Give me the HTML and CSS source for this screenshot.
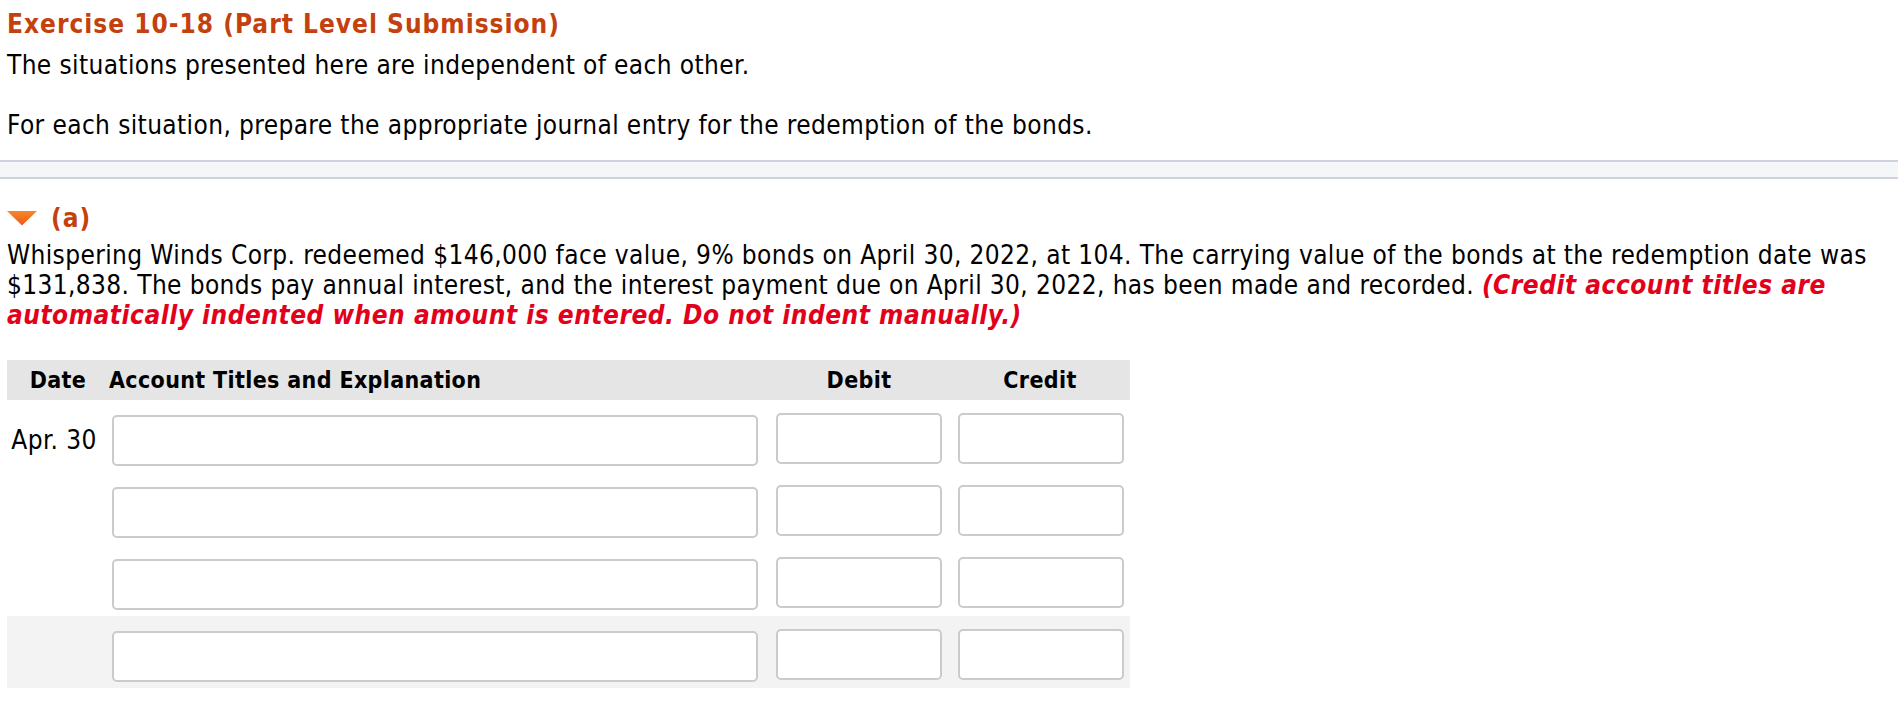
FILE: index.html
```html
<!DOCTYPE html>
<html lang="en">
<head>
<meta charset="utf-8">
<title>Exercise 10-18</title>
<link rel="stylesheet" href="styles.css">
</head>
<body>
<div class="intro">
  <h1 class="title">Exercise 10-18 (Part Level Submission)</h1>
  <p class="line">The situations presented here are independent of each other.</p>
  <p class="line gap">For each situation, prepare the appropriate journal entry for the redemption of the bonds.</p>
</div>
<div class="band"></div>
<div class="part">
  <div class="part-head">
    <svg class="tri" width="30" height="16" viewBox="0 0 30 16" aria-hidden="true">
      <defs>
        <linearGradient id="g" x1="0" y1="0" x2="0" y2="1">
          <stop offset="0" stop-color="#f7862a"/>
          <stop offset="1" stop-color="#ee5a14"/>
        </linearGradient>
      </defs>
      <polygon points="0,1 30,1 15,15.5" fill="url(#g)"/>
    </svg>
    <span class="part-label">(a)</span>
  </div>
  <p class="problem">Whispering Winds Corp. redeemed $146,000 face value, 9% bonds on April 30, 2022, at 104. The carrying value of the bonds at the redemption date was $131,838. The bonds pay annual interest, and the interest payment due on April 30, 2022, has been made and recorded. <em class="note">(Credit account titles are automatically indented when amount is entered. Do not indent manually.)</em></p>

  <div class="journal">
    <div class="jrow head">
      <div class="c-date">Date</div>
      <div class="c-acct">Account Titles and Explanation</div>
      <div class="c-amt">Debit</div>
      <div class="c-amt">Credit</div>
    </div>
    <div class="jrow">
      <div class="c-date">Apr. 30</div>
      <div class="c-acct"><input class="box acct" type="text"></div>
      <div class="c-amt"><input class="box amt" type="text"></div>
      <div class="c-amt"><input class="box amt" type="text"></div>
    </div>
    <div class="jrow">
      <div class="c-date"></div>
      <div class="c-acct"><input class="box acct" type="text"></div>
      <div class="c-amt"><input class="box amt" type="text"></div>
      <div class="c-amt"><input class="box amt" type="text"></div>
    </div>
    <div class="jrow">
      <div class="c-date"></div>
      <div class="c-acct"><input class="box acct" type="text"></div>
      <div class="c-amt"><input class="box amt" type="text"></div>
      <div class="c-amt"><input class="box amt" type="text"></div>
    </div>
    <div class="jrow shaded">
      <div class="c-date"></div>
      <div class="c-acct"><input class="box acct" type="text"></div>
      <div class="c-amt"><input class="box amt" type="text"></div>
      <div class="c-amt"><input class="box amt" type="text"></div>
    </div>
  </div>
</div>
</body>
</html>
```
FILE: styles.css
```css
html, body {
  margin: 0;
  padding: 0;
  background: #fff;
}
body {
  font-family: "DejaVu Sans Condensed", "DejaVu Sans", sans-serif;
  font-stretch: condensed;
  font-size: 26px;
  line-height: 30px;
  letter-spacing: 0.38px;
  color: #000;
}
.intro {
  padding: 9px 7px 20px;
}
.title {
  margin: 0 0 11px;
  font-size: 26px;
  line-height: 30px;
  font-weight: bold;
  letter-spacing: 1px;
  color: #c4410e;
}
.line {
  margin: 0;
}
.line.gap {
  margin-top: 30px;
}
.band {
  height: 15px;
  background: #f5f6f8;
  border-top: 2px solid #ccd3de;
  border-bottom: 2px solid #ccd3de;
}
.part {
  padding: 24px 7px 0;
}
.part-head {
  display: flex;
  align-items: center;
  gap: 14px;
  height: 30px;
}
.tri {
  display: block;
}
.part-label {
  font-weight: bold;
  letter-spacing: 1px;
  color: #c4410e;
}
.problem {
  margin: 7px 0 0;
}
.note {
  font-weight: bold;
  font-style: italic;
  letter-spacing: 0.5px;
  color: #e3001b;
}
.journal {
  margin-top: 30px;
  width: 1123px;
}
.jrow {
  display: grid;
  grid-template-columns: 98px 663px 182px 180px;
  height: 72px;
  align-items: start;
}
.jrow.head {
  height: 40px;
  align-items: center;
  background: #e5e5e5;
  font-weight: bold;
  font-size: 23px;
  letter-spacing: 0.35px;
}
.jrow.shaded {
  background: #f3f3f3;
}
.c-date {
  text-align: center;
  padding-left: 4px;
}
.jrow:not(.head) .c-date {
  padding-top: 25px;
  padding-left: 0;
  padding-right: 4px;
}
.c-acct {
  padding-left: 4px;
}
.jrow:not(.head) .c-acct {
  padding: 15px 0 0 7px;
}
.c-amt {
  text-align: center;
}
.jrow:not(.head) .c-amt {
  padding: 13px 0 0 8px;
  text-align: left;
}
.box {
  display: block;
  box-sizing: border-box;
  height: 51px;
  margin: 0;
  padding: 0 8px;
  border: 2px solid #cbcbcb;
  border-radius: 5px;
  background: #fff;
  font: inherit;
  outline: none;
}
.box.acct {
  width: 646px;
}
.box.amt {
  width: 166px;
}
```
